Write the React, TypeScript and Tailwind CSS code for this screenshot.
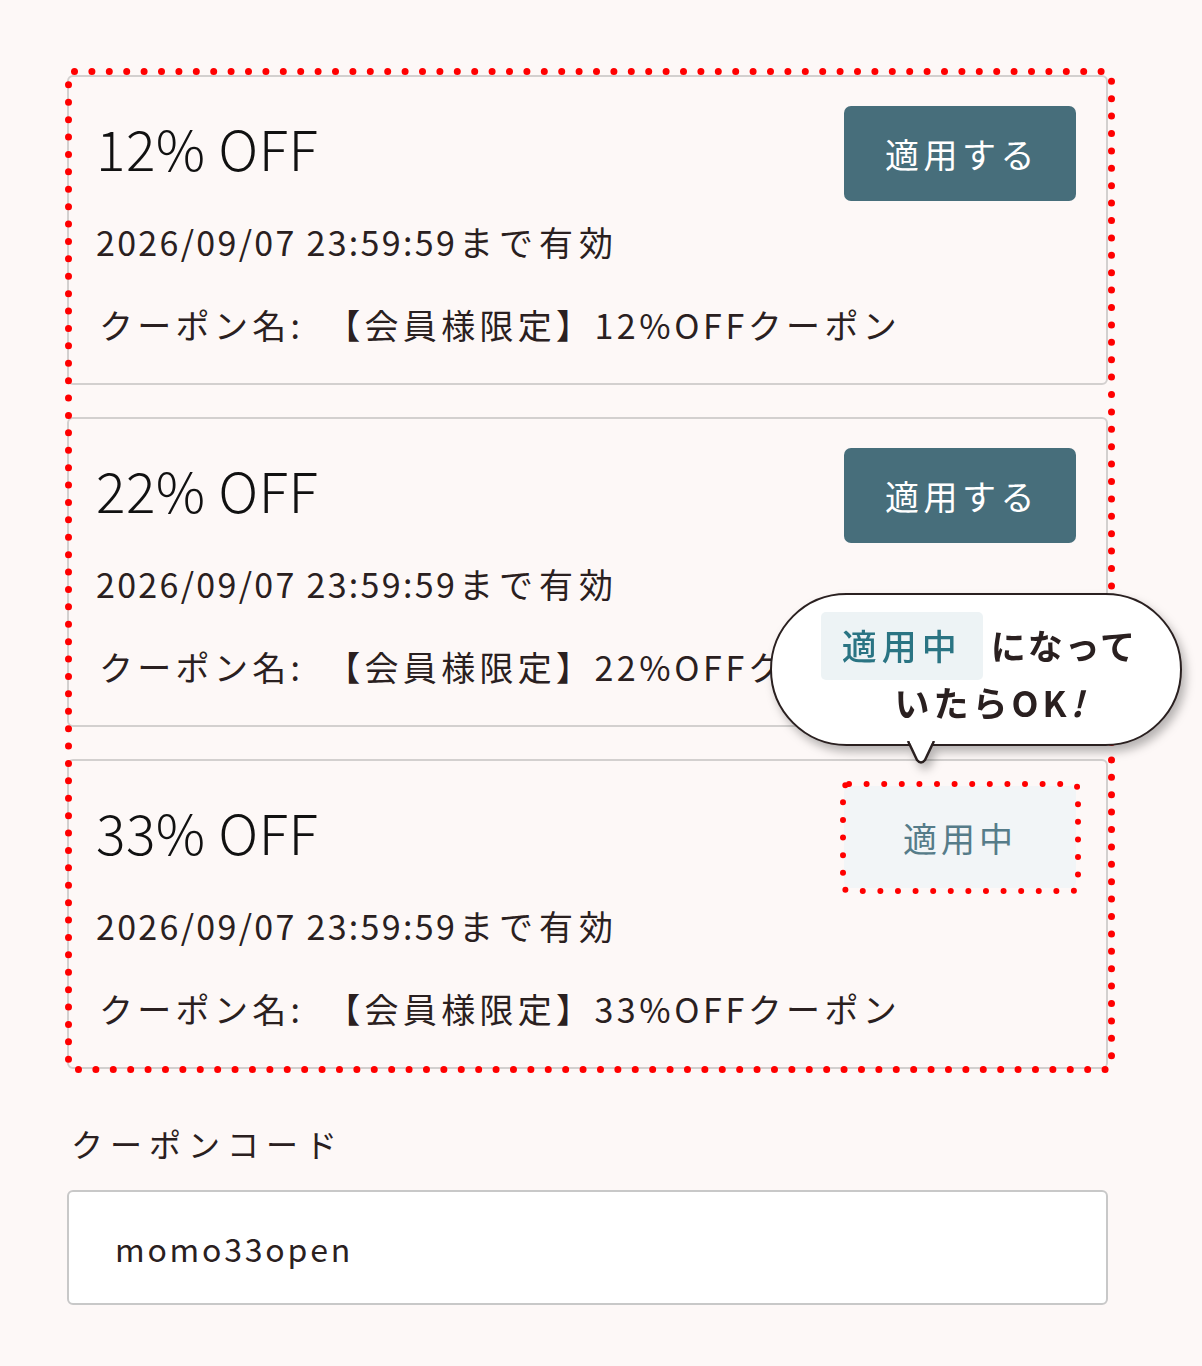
import React from "react";

const JP = "font-['Noto_Sans_CJK_JP','Noto_Sans',sans-serif]";

function Dotted({ w, h, rx, sw, gap }: { w: number; h: number; rx: number; sw: number; gap: number }) {
  return (
    <svg width={w} height={h} viewBox={`0 0 ${w} ${h}`} className="block">
      <rect
        x={sw / 2}
        y={sw / 2}
        width={w - sw}
        height={h - sw}
        rx={rx}
        fill="none"
        stroke="#ff0000"
        strokeWidth={sw}
        strokeLinecap="round"
        strokeDasharray={`0 ${gap}`}
      />
    </svg>
  );
}

function Card({ title, pct, active }: { title: string; pct: string; active?: boolean }) {
  return (
    <div className="h-[310px] rounded-[6px] border-2 border-[#d3d0cf] pl-[27px] pr-[30px] pt-[28px]">
      <div className="flex h-[96px] items-center justify-between">
        <div className={`${JP} pb-[12px] text-[55px] font-light leading-none text-[#111] tracking-[0.5px]`}>{title}</div>
        {active ? (
          <div className="relative">
            <div className={`${JP} flex h-[102px] w-[232px] items-center justify-center rounded-[6px] bg-[#f2f5f7] text-[34px] tracking-[4px] text-[#567c89]`}>
              適用中
            </div>
            <div className="pointer-events-none absolute left-[-4px] top-[-5px]">
              <Dotted w={241} h={113} rx={6} sw={6} gap={17.6} />
            </div>
          </div>
        ) : (
          <button className={`${JP} flex h-[95px] w-[232px] items-center justify-center rounded-[7px] bg-[#476e7b] pl-[4px] text-[34px] tracking-[4.5px] text-white`}>
            適用する
          </button>
        )}
      </div>
      <div className={`${JP} mt-[19px] text-[34px] leading-[44px] tracking-[6px] text-[#2a2020]`}>
        <span className="mr-[2px] tracking-[2.3px]">2026/09/07 23:59:59</span>まで有効
      </div>
      <div className={`${JP} mt-[39px] ml-[3px] text-[34px] leading-[44px] tracking-[4.3px] text-[#2a2020]`}>
        クーポン名:<span className="ml-[22px]">【会員様限定】</span>
        <span className="tracking-[3.6px]">{pct}OFF</span>クーポン
      </div>
    </div>
  );
}

export default function App() {
  return (
    <div className="min-h-[1366px] w-full bg-[#fdf8f7] pt-[75px]">
      <div className="relative ml-[67px] w-[1041px]">
        <div className="flex flex-col gap-[32px]">
          <Card title="12% OFF" pct="12%" />
          <Card title="22% OFF" pct="22%" />
          <Card title="33% OFF" pct="33%" active />
        </div>

        {/* red dotted annotation frame */}
        <div className="pointer-events-none absolute left-[-2px] top-[-7px]">
          <Dotted w={1050} h={1005} rx={6} sw={7} gap={17.4} />
        </div>

        {/* speech bubble */}
        <div className="absolute left-[703px] top-[518px] drop-shadow-[4px_6px_5px_rgba(0,0,0,0.28)]">
          <div className="relative">
            <div className="flex h-[153px] w-[412px] flex-col items-center justify-center rounded-full border-[2.5px] border-[#2a2020] bg-white pl-[6px]">
              <div className={`${JP} flex items-center text-[35px] font-bold text-[#2a2020] tracking-[2px]`}>
                <span className="mr-[8px] flex h-[68px] w-[162px] items-center justify-center rounded-[5px] bg-[#edf3f5] font-medium tracking-[5px] text-[#2a7483]">
                  適用中
                </span>
                になって
              </div>
              <div className={`${JP} mt-[-4px] pl-[24px] text-[35px] font-bold leading-[52px] text-[#2a2020] tracking-[4px]`}>
                いたらOK<span className="italic">!</span>
              </div>
            </div>
            <svg className="absolute left-[136px] top-[148px]" width="30" height="26" viewBox="0 0 30 26">
              <path d="M2 0 L11 19 Q15 24 19 19 L28 0" fill="#ffffff" stroke="#2a2020" strokeWidth="2.5" strokeLinejoin="round" />
              <rect x="4" y="-2" width="22" height="4" fill="#ffffff" />
            </svg>
          </div>
        </div>
      </div>

      <div className={`${JP} ml-[71px] mt-[52px] text-[32px] leading-[44px] tracking-[7px] text-[#2a2020]`}>
        クーポンコード
      </div>
      <div className="ml-[67px] mt-[25px] flex h-[115px] w-[1041px] items-center rounded-[6px] border-2 border-[#c8c8c8] bg-white pl-[46px]">
        <span className={`${JP} text-[32px] tracking-[2.8px] text-[#2a2020]`}>momo33open</span>
      </div>
    </div>
  );
}
